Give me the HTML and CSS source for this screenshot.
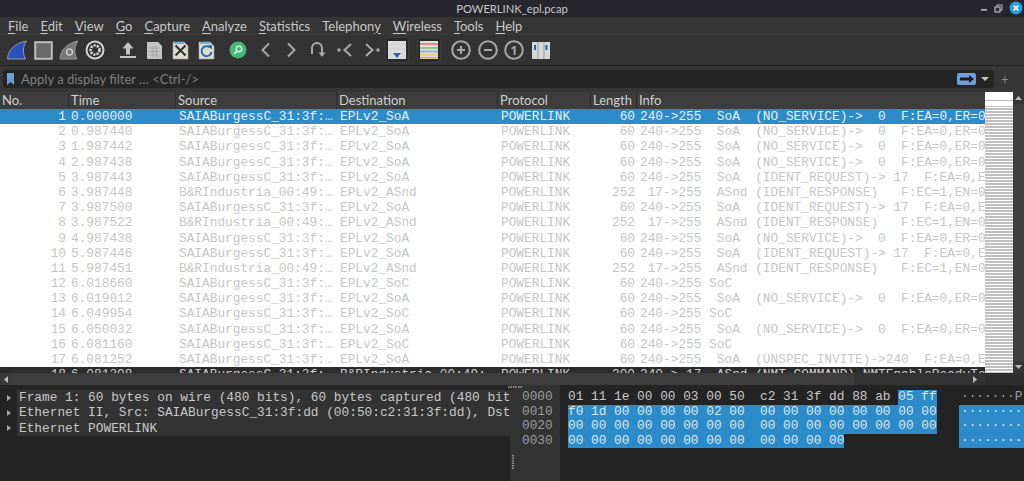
FILE: index.html
```
<!DOCTYPE html>
<html lang="en">
<head>
<meta charset="utf-8">
<title>POWERLINK_epl.pcap</title>
<link rel="stylesheet" href="styles.css">
</head>
<body>
<div class="app">
  <header class="titlebar">
    <span class="title">POWERLINK_epl.pcap</span>
    <div class="winbtns">
      <svg width="8" height="8" viewBox="0 0 8 8"><rect x="1" y="5" width="6" height="1.6" fill="#b8b8b8"/></svg>
      <svg width="9" height="9" viewBox="0 0 9 9"><rect x="3" y="1" width="5" height="5" fill="none" stroke="#b8b8b8"/><rect x="1" y="3" width="5" height="5" fill="#2b2b31" stroke="#d0d0d0"/></svg>
      <svg width="14" height="14" viewBox="0 0 14 14"><circle cx="7" cy="7" r="6.5" fill="#2d9fe0"/><path d="M4.6 4.6l4.8 4.8M9.4 4.6l-4.8 4.8" stroke="#fff" stroke-width="1.6"/></svg>
    </div>
  </header>
  <nav class="menubar">
    <span><u>F</u>ile</span><span><u>E</u>dit</span><span><u>V</u>iew</span><span><u>G</u>o</span><span><u>C</u>apture</span><span><u>A</u>nalyze</span><span><u>S</u>tatistics</span><span>Telephon<u>y</u></span><span><u>W</u>ireless</span><span><u>T</u>ools</span><span><u>H</u>elp</span>
  </nav>
  <div class="toolbar">
    <div class="tgroup g1">
      <div class="tool"><svg width="22" height="20" viewBox="0 0 22 20"><path d="M1.5 19C2 10 9 3 20.5 1C16.5 7 16.5 13 19.5 19Z" fill="#2c4fc0" stroke="#9a9a9a"/></svg></div>
      <div class="tool"><svg width="19" height="19" viewBox="0 0 19 19"><rect x="1.2" y="1.2" width="16.6" height="16.6" fill="#6a6a6a" stroke="#bdbdbd" stroke-width="2"/></svg></div>
      <div class="tool"><svg width="20" height="20" viewBox="0 0 20 20"><path d="M1 19C1.500 10 8 3 19 1C15 7 15 13 18 19Z" fill="#777" stroke="#999"/><circle cx="10.500" cy="12" r="3" fill="none" stroke="#c8c8c8" stroke-width="1.500"/></svg></div>
      <div class="tool"><svg width="20" height="20" viewBox="0 0 20 20"><circle cx="10" cy="10" r="8.500" fill="none" stroke="#d5d5d5" stroke-width="2"/><circle cx="10" cy="10" r="4.500" fill="none" stroke="#d5d5d5" stroke-width="2.600" stroke-dasharray="2.200 1"/></svg></div>
    </div>
    <div class="tgroup g2">
      <div class="tool"><svg width="18" height="18" viewBox="0 0 18 18"><path d="M9 1l5.500 6.500h-3.500v6h-4v-6h-3.500z" fill="#c6c6c6"/><rect x="1" y="15" width="16" height="2" fill="#c6c6c6"/></svg></div>
      <div class="tool"><svg width="17" height="19" viewBox="0 0 17 19"><path d="M1 1h11l4 4v13h-15z" fill="#c4c4c4"/><path d="M3.500 7h10M3.500 10.500h10M3.500 14h10M7 5v11M10.500 5v11" stroke="#a6a6a6"/></svg></div>
      <div class="tool"><svg width="17" height="19" viewBox="0 0 17 19"><path d="M1 1h11l4 4v13h-15z" fill="#dedccc" stroke="#aaa" stroke-width=".6"/><path d="M2 1h10v2h-10z" fill="#6fb0dc"/><path d="M3.500 4.500l10 10M13.500 4.500l-10 10" stroke="#2f2f2f" stroke-width="2"/></svg></div>
      <div class="tool"><svg width="17" height="19" viewBox="0 0 17 19"><path d="M1 1h11l4 4v13h-15z" fill="#dedccc" stroke="#aaa" stroke-width=".6"/><path d="M2 1h10v2h-10z" fill="#6fb0dc"/><path d="M12 6.500A5 5 0 1 0 13.500 11" fill="none" stroke="#2c68b0" stroke-width="2"/><path d="M9.500 4.500l4.500-.500v4.500z" fill="#2c68b0"/></svg></div>
    </div>
    <div class="tgroup g3">
      <div class="tool"><svg width="18" height="18" viewBox="0 0 18 18"><circle cx="9" cy="9" r="8.500" fill="#44b977"/><circle cx="10" cy="8" r="2.800" fill="none" stroke="#e9f7ee" stroke-width="1.300"/><path d="M8 10l-3 3" stroke="#e9f7ee" stroke-width="1.500"/></svg></div>
      <div class="tool"><svg width="11" height="16" viewBox="0 0 11 16"><path d="M9 1.500L2.500 8L9 14.500" fill="none" stroke="#a8a8a8" stroke-width="2"/></svg></div>
      <div class="tool"><svg width="11" height="16" viewBox="0 0 11 16"><path d="M2 1.500L8.500 8L2 14.500" fill="none" stroke="#a8a8a8" stroke-width="2"/></svg></div>
      <div class="tool"><svg width="16" height="16" viewBox="0 0 16 16"><path d="M2 12V6a5 5 0 0 1 10 0v6" fill="none" stroke="#a8a8a8" stroke-width="2"/><path d="M8.500 10.500h7L12 15z" fill="#a8a8a8"/></svg></div>
      <div class="tool"><svg width="16" height="16" viewBox="0 0 16 16"><circle cx="2" cy="8" r="1.800" fill="#a8a8a8"/><path d="M14 2L7.500 8L14 14" fill="none" stroke="#a8a8a8" stroke-width="2"/></svg></div>
      <div class="tool"><svg width="16" height="16" viewBox="0 0 16 16"><path d="M2 2L8.500 8L2 14" fill="none" stroke="#a8a8a8" stroke-width="2"/><circle cx="14" cy="8" r="1.800" fill="#a8a8a8"/></svg></div>
    </div>
    <div class="tgroup g4">
      <div class="tool on"><svg width="18" height="18" viewBox="0 0 18 18"><rect width="18" height="18" fill="#dcdcdc"/><path d="M1 13h16M1 3h16M1 8h16" stroke="#cfcfcf"/><path d="M5 12h8l-4 5z" fill="#2a62ad"/></svg></div>
      <div class="tool on"><svg width="18" height="18" viewBox="0 0 18 18"><rect width="18" height="18" fill="#ddd"/><rect y="2" width="18" height="2" fill="#e58a8a"/><rect y="6" width="18" height="2" fill="#8cc98c"/><rect y="9.500" width="18" height="2" fill="#a9a9e0"/><rect y="13" width="18" height="1.500" fill="#e0d26a"/><rect y="16" width="18" height="1.500" fill="#d8b45a"/></svg></div>
    </div>
    <div class="tgroup g5">
      <div class="tool"><svg width="20" height="20" viewBox="0 0 20 20"><circle cx="10" cy="10" r="8.800" fill="none" stroke="#a8a8a8" stroke-width="2"/><path d="M6 10h8M10 6v8" stroke="#a8a8a8" stroke-width="2"/></svg></div>
      <div class="tool"><svg width="20" height="20" viewBox="0 0 20 20"><circle cx="10" cy="10" r="8.800" fill="none" stroke="#a8a8a8" stroke-width="2"/><path d="M6 10h8" stroke="#a8a8a8" stroke-width="2"/></svg></div>
      <div class="tool"><svg width="20" height="20" viewBox="0 0 20 20"><circle cx="10" cy="10" r="8.800" fill="none" stroke="#a8a8a8" stroke-width="2"/><text x="10" y="14.500" text-anchor="middle" class="one">1</text></svg></div>
      <div class="tool"><svg width="18" height="17" viewBox="0 0 18 17"><rect width="18" height="17" fill="#d8d8d8"/><path d="M6 0v17M12 0v17" stroke="#9a9a9a"/><rect x="2" y="3" width="2" height="5" fill="#2a62ad"/><rect x="13.500" y="3" width="2" height="5" fill="#2a62ad"/></svg></div>
    </div>
  </div>
  <div class="filterwrap">
    <div class="filter">
      <svg class="bookmark" width="7" height="12" viewBox="0 0 7 12"><path d="M0 0h7v12l-3.500-3L0 12z" fill="#6f9fd8"/></svg>
      <span class="placeholder">Apply a display filter … &lt;Ctrl-/&gt;</span>
      <span class="go"><svg width="14" height="8" viewBox="0 0 14 8"><path d="M0 2.500h9V0l5 4-5 4V5.500H0z" fill="#1d1d1d"/></svg></span>
      <svg class="drop" width="8" height="4" viewBox="0 0 8 4"><path d="M0 0h8L4 4z" fill="#c8c8c8"/></svg>
    </div>
    <span class="plus">+</span>
  </div>
  <section class="packets">
    <div class="plist">
      <div class="phead"><span>No.</span><span>Time</span><span>Source</span><span>Destination</span><span>Protocol</span><span>Length</span><span>Info</span></div>
      <div class="prows">
        <div class="row sel"><span class="n">1</span><span>0.000000</span><span>SAIABurgessC_31:3f:…</span><span>EPLv2_SoA</span><span>POWERLINK</span><span class="n">60</span><span>240-&gt;255  SoA  (NO_SERVICE)-&gt;  0  F:EA=0,ER=0</span></div>
        <div class="row"><span class="n">2</span><span>0.987440</span><span>SAIABurgessC_31:3f:…</span><span>EPLv2_SoA</span><span>POWERLINK</span><span class="n">60</span><span>240-&gt;255  SoA  (NO_SERVICE)-&gt;  0  F:EA=0,ER=0</span></div>
        <div class="row"><span class="n">3</span><span>1.987442</span><span>SAIABurgessC_31:3f:…</span><span>EPLv2_SoA</span><span>POWERLINK</span><span class="n">60</span><span>240-&gt;255  SoA  (NO_SERVICE)-&gt;  0  F:EA=0,ER=0</span></div>
        <div class="row"><span class="n">4</span><span>2.987438</span><span>SAIABurgessC_31:3f:…</span><span>EPLv2_SoA</span><span>POWERLINK</span><span class="n">60</span><span>240-&gt;255  SoA  (NO_SERVICE)-&gt;  0  F:EA=0,ER=0</span></div>
        <div class="row"><span class="n">5</span><span>3.987443</span><span>SAIABurgessC_31:3f:…</span><span>EPLv2_SoA</span><span>POWERLINK</span><span class="n">60</span><span>240-&gt;255  SoA  (IDENT_REQUEST)-&gt; 17  F:EA=0,EA=0</span></div>
        <div class="row"><span class="n">6</span><span>3.987448</span><span>B&amp;RIndustria_00:49:…</span><span>EPLv2_ASnd</span><span>POWERLINK</span><span class="n">252</span><span> 17-&gt;255  ASnd (IDENT_RESPONSE)   F:EC=1,EN=0</span></div>
        <div class="row"><span class="n">7</span><span>3.987500</span><span>SAIABurgessC_31:3f:…</span><span>EPLv2_SoA</span><span>POWERLINK</span><span class="n">60</span><span>240-&gt;255  SoA  (IDENT_REQUEST)-&gt; 17  F:EA=0,EA=0</span></div>
        <div class="row"><span class="n">8</span><span>3.987522</span><span>B&amp;RIndustria_00:49:…</span><span>EPLv2_ASnd</span><span>POWERLINK</span><span class="n">252</span><span> 17-&gt;255  ASnd (IDENT_RESPONSE)   F:EC=1,EN=0</span></div>
        <div class="row"><span class="n">9</span><span>4.987438</span><span>SAIABurgessC_31:3f:…</span><span>EPLv2_SoA</span><span>POWERLINK</span><span class="n">60</span><span>240-&gt;255  SoA  (NO_SERVICE)-&gt;  0  F:EA=0,ER=0</span></div>
        <div class="row"><span class="n">10</span><span>5.987446</span><span>SAIABurgessC_31:3f:…</span><span>EPLv2_SoA</span><span>POWERLINK</span><span class="n">60</span><span>240-&gt;255  SoA  (IDENT_REQUEST)-&gt; 17  F:EA=0,EA=0</span></div>
        <div class="row"><span class="n">11</span><span>5.987451</span><span>B&amp;RIndustria_00:49:…</span><span>EPLv2_ASnd</span><span>POWERLINK</span><span class="n">252</span><span> 17-&gt;255  ASnd (IDENT_RESPONSE)   F:EC=1,EN=0</span></div>
        <div class="row"><span class="n">12</span><span>6.018660</span><span>SAIABurgessC_31:3f:…</span><span>EPLv2_SoC</span><span>POWERLINK</span><span class="n">60</span><span>240-&gt;255 SoC</span></div>
        <div class="row"><span class="n">13</span><span>6.019012</span><span>SAIABurgessC_31:3f:…</span><span>EPLv2_SoA</span><span>POWERLINK</span><span class="n">60</span><span>240-&gt;255  SoA  (NO_SERVICE)-&gt;  0  F:EA=0,ER=0</span></div>
        <div class="row"><span class="n">14</span><span>6.049954</span><span>SAIABurgessC_31:3f:…</span><span>EPLv2_SoC</span><span>POWERLINK</span><span class="n">60</span><span>240-&gt;255 SoC</span></div>
        <div class="row"><span class="n">15</span><span>6.050032</span><span>SAIABurgessC_31:3f:…</span><span>EPLv2_SoA</span><span>POWERLINK</span><span class="n">60</span><span>240-&gt;255  SoA  (NO_SERVICE)-&gt;  0  F:EA=0,ER=0</span></div>
        <div class="row"><span class="n">16</span><span>6.081160</span><span>SAIABurgessC_31:3f:…</span><span>EPLv2_SoC</span><span>POWERLINK</span><span class="n">60</span><span>240-&gt;255 SoC</span></div>
        <div class="row"><span class="n">17</span><span>6.081252</span><span>SAIABurgessC_31:3f:…</span><span>EPLv2_SoA</span><span>POWERLINK</span><span class="n">60</span><span>240-&gt;255  SoA  (UNSPEC_INVITE)-&gt;240  F:EA=0,EA=0</span></div>
        <div class="row dark"><span class="n">18</span><span>6.081308</span><span>SAIABurgessC_31:3f:…</span><span>B&amp;RIndustria_00:49:…</span><span>POWERLINK</span><span class="n">200</span><span>240-&gt; 17  ASnd (NMT_COMMAND) NMTEnableReadyToOperate</span></div>
      </div>
    </div>
    <div class="minimap"></div>
    <div class="vscroll">
      <svg width="7" height="4" viewBox="0 0 7 4"><path d="M0 4h7L3.500 0z" fill="#bbb"/></svg>
      <div class="vthumb"></div>
      <svg width="7" height="4" viewBox="0 0 7 4"><path d="M0 0h7L3.500 4z" fill="#bbb"/></svg>
    </div>
  </section>
  <div class="hscroll">
    <svg class="harrow" width="4" height="7" viewBox="0 0 4 7"><path d="M4 0v7L0 3.500z" fill="#bbb"/></svg>
    <div class="hthumb"></div>
    <div class="htrack"><svg width="4" height="7" viewBox="0 0 4 7"><path d="M0 0v7l4-3.500z" fill="#bbb"/></svg></div>
    <div class="hend"></div>
  </div>
  <section class="bottom">
    <div class="tree">
      <div class="tline"><i class="tri"></i><span class="ttext">Frame 1: 60 bytes on wire (480 bits), 60 bytes captured (480 bits)</span></div>
      <div class="tline"><i class="tri"></i><span class="ttext">Ethernet II, Src: SAIABurgessC_31:3f:dd (00:50:c2:31:3f:dd), Dst: EPLv2_SoA</span></div>
      <div class="tline"><i class="tri"></i><span class="ttext">Ethernet POWERLINK</span></div>
    </div>
    <div class="offsets">
      <svg class="handle" width="14" height="2" viewBox="0 0 14 2"><path d="M0 1h14" stroke="#8a8a8a" stroke-width="2" stroke-dasharray="1.500 1"/></svg>
      <div>0000</div><div>0010</div><div>0020</div><div>0030</div>
      <svg class="grip" width="2" height="14" viewBox="0 0 2 14"><path d="M1 0v14" stroke="#8a8a8a" stroke-width="2" stroke-dasharray="1.500 1"/></svg>
    </div>
    <div class="hex">
      <div class="hline">01 11 1e 00 00 03 00 50  c2 31 3f dd 88 ab <b>05 ff</b></div>
      <div class="hline"><b>f0 1d 00 00 00 00 02 00  00 00 00 00 00 00 00 00</b></div>
      <div class="hline"><b>00 00 00 00 00 00 00 00  00 00 00 00 00 00 00 00</b></div>
      <div class="hline"><b>00 00 00 00 00 00 00 00  00 00 00 00</b></div>
    </div>
    <div class="ascii">
      <div class="aline first">·······P</div>
      <div class="aline">········</div>
      <div class="aline">········</div>
      <div class="aline">········</div>
    </div>
  </section>
</div>
</body>
</html>
```
FILE: styles.css
```
* { box-sizing: border-box; }
html, body { margin: 0; padding: 0; }
body { width: 1024px; height: 481px; overflow: hidden; background: #242424; font-family: Lato, "Noto Sans", sans-serif; color: #c8c8c8; }
.app { width: 1024px; height: 481px; display: flex; flex-direction: column; overflow: hidden; }

.titlebar { height: 17px; background: #26262c; display: flex; align-items: center; justify-content: center; position: relative; flex: none; }
.title { font-size: 11.200px; color: #c9c9c9; }
.winbtns { position: absolute; right: 1px; top: 1px; display: flex; align-items: center; gap: 6px; }

.menubar { height: 18px; background: #353535; display: flex; gap: 12px; padding-left: 8px; align-items: center; font-size: 13px; color: #c9c9c9; flex: none; border-bottom: 1px solid #3b3b3b; }
.menubar u { text-underline-offset: 2px; text-decoration-thickness: 1px; }

.toolbar { height: 31px; background: #333; display: flex; align-items: center; padding-left: 4px; border-bottom: 1px solid #232323; flex: none; }
.tgroup { display: flex; align-items: center; }
.tool { width: 26px; height: 26px; display: flex; align-items: center; justify-content: center; }
.g2 { margin-left: 7px; }
.g3 { margin-left: 6px; }
.g3 .tool { width: 26.700px; }
.g4 { gap: 8px; }
.g4 .tool { width: 24px; background: #2a2a2a; border: 1px solid #3d3d3d; border-radius: 3px; }
.g5 { margin-left: 7px; }
.g5 .tool { width: 26.500px; }
.one { font-family: "Noto Sans", sans-serif; font-size: 12px; font-weight: 700; fill: #a8a8a8; }

.filterwrap { height: 26px; background: #363636; padding: 4px 0 4px 3px; display: flex; align-items: center; flex: none; }
.filter { width: 991px; height: 18px; background: #252525; border-radius: 3px; display: flex; align-items: center; padding-left: 4px; flex: none; }
.bookmark { flex: none; }
.placeholder { font-size: 13px; color: #7f7f7f; margin-left: 7px; flex: 1; }
.go { width: 19px; height: 12px; background: #6f9fd8; border-radius: 2px; display: flex; align-items: center; justify-content: center; }
.drop { margin: 0 5px 0 5px; }
.plus { margin-left: 7px; font-size: 13px; color: #8c8c8c; line-height: 1; }

.packets { height: 281px; display: flex; flex: none; background: #2b2b2b; }
.plist { width: 985px; flex: none; display: flex; flex-direction: column; overflow: hidden; }
.phead { height: 17px; flex: none; background: #3d3d3d; display: grid; grid-template-columns: 69px 107px 161px 161px 93px 46px 348px; font-size: 13px; line-height: 17px; color: #cfcfcf; }
.phead span { padding-left: 2px; border-right: 1px solid #2d2d2d; }
.phead span:last-child { border-right: 0; }
.prows { height: 264px; background: #fff; overflow: hidden; }
.row { height: 15.200px; display: grid; grid-template-columns: 68px 108px 161px 161px 93px 46px 348px; font-family: "Liberation Mono", monospace; font-size: 12.800px; line-height: 15.200px; color: #c6c6c6; }
.row span { padding-left: 3px; overflow: hidden; white-space: pre; }
.row .n { text-align: right; padding: 0 2px 0 0; }
.row.sel { background: #2e8bc9; color: #e4f0f8; }
.row.dark { background: #2b2b2b; color: #cfcfcf; height: 20px; }

.minimap { width: 28px; flex: none; background-color: #fff; background-image:
  linear-gradient(#fff 0 8px, #bbb 8px 9px, #fff 9px 14px, transparent 14px),
  repeating-linear-gradient(#fff 0 1px, #c0c0c0 1px 3px); }
.vscroll { width: 11px; flex: none; background: #353535; display: flex; flex-direction: column; align-items: center; justify-content: space-between; padding: 4px 0; }
.vthumb { flex: 1; width: 100%; margin: 4px 0; background: #3e3e3e; }

.hscroll { height: 12px; background: #3a3a3a; display: flex; align-items: center; flex: none; }
.harrow { margin: 0 4px; flex: none; }
.hthumb { width: 842px; flex: none; height: 100%; background: #3d3d3d; }
.htrack { width: 131px; flex: none; height: 100%; background: #333; display: flex; align-items: center; justify-content: flex-end; padding-right: 8px; }
.hend { flex: 1; height: 100%; background: #2e2e2e; }

.bottom { flex: 1; display: flex; background: #242424; font-family: "Liberation Mono", monospace; font-size: 12.800px; overflow: hidden; }
.tree { width: 510px; flex: none; padding-top: 5px; overflow: hidden; }
.tline { height: 15.300px; line-height: 15.300px; display: flex; align-items: center; }
.tri { width: 0; height: 0; flex: none; margin: 0 6px 0 7px; border-left: 4px solid #a8a8a8; border-top: 3px solid transparent; border-bottom: 3px solid transparent; }
.ttext { flex: 1; background: #333; padding-left: 2px; height: 100%; color: #c8c8c8; overflow: hidden; white-space: pre; }
.offsets { width: 50px; flex: none; background: #333; padding: 5px 0 0 12px; color: #9c9c9c; line-height: 14.500px; position: relative; }
.handle { position: absolute; left: -2px; top: 1px; }
.grip { position: absolute; left: 2px; top: 70px; }
.hex { width: 399px; flex: none; padding: 5px 0 0 8px; line-height: 14.500px; color: #c8c8c8; }
.hline { height: 14.500px; white-space: pre; }
.hline b { font-weight: 400; background: #2e8bc9; display: inline-block; height: 14.500px; color: #d8e8f2; }
.ascii { flex: 1; padding-top: 5px; line-height: 14.500px; }
.aline { height: 14.500px; background: #2e8bc9; color: #d8e8f2; padding-left: 2px; white-space: pre; }
.aline.first { background: transparent; color: #9c9c9c; }
```
